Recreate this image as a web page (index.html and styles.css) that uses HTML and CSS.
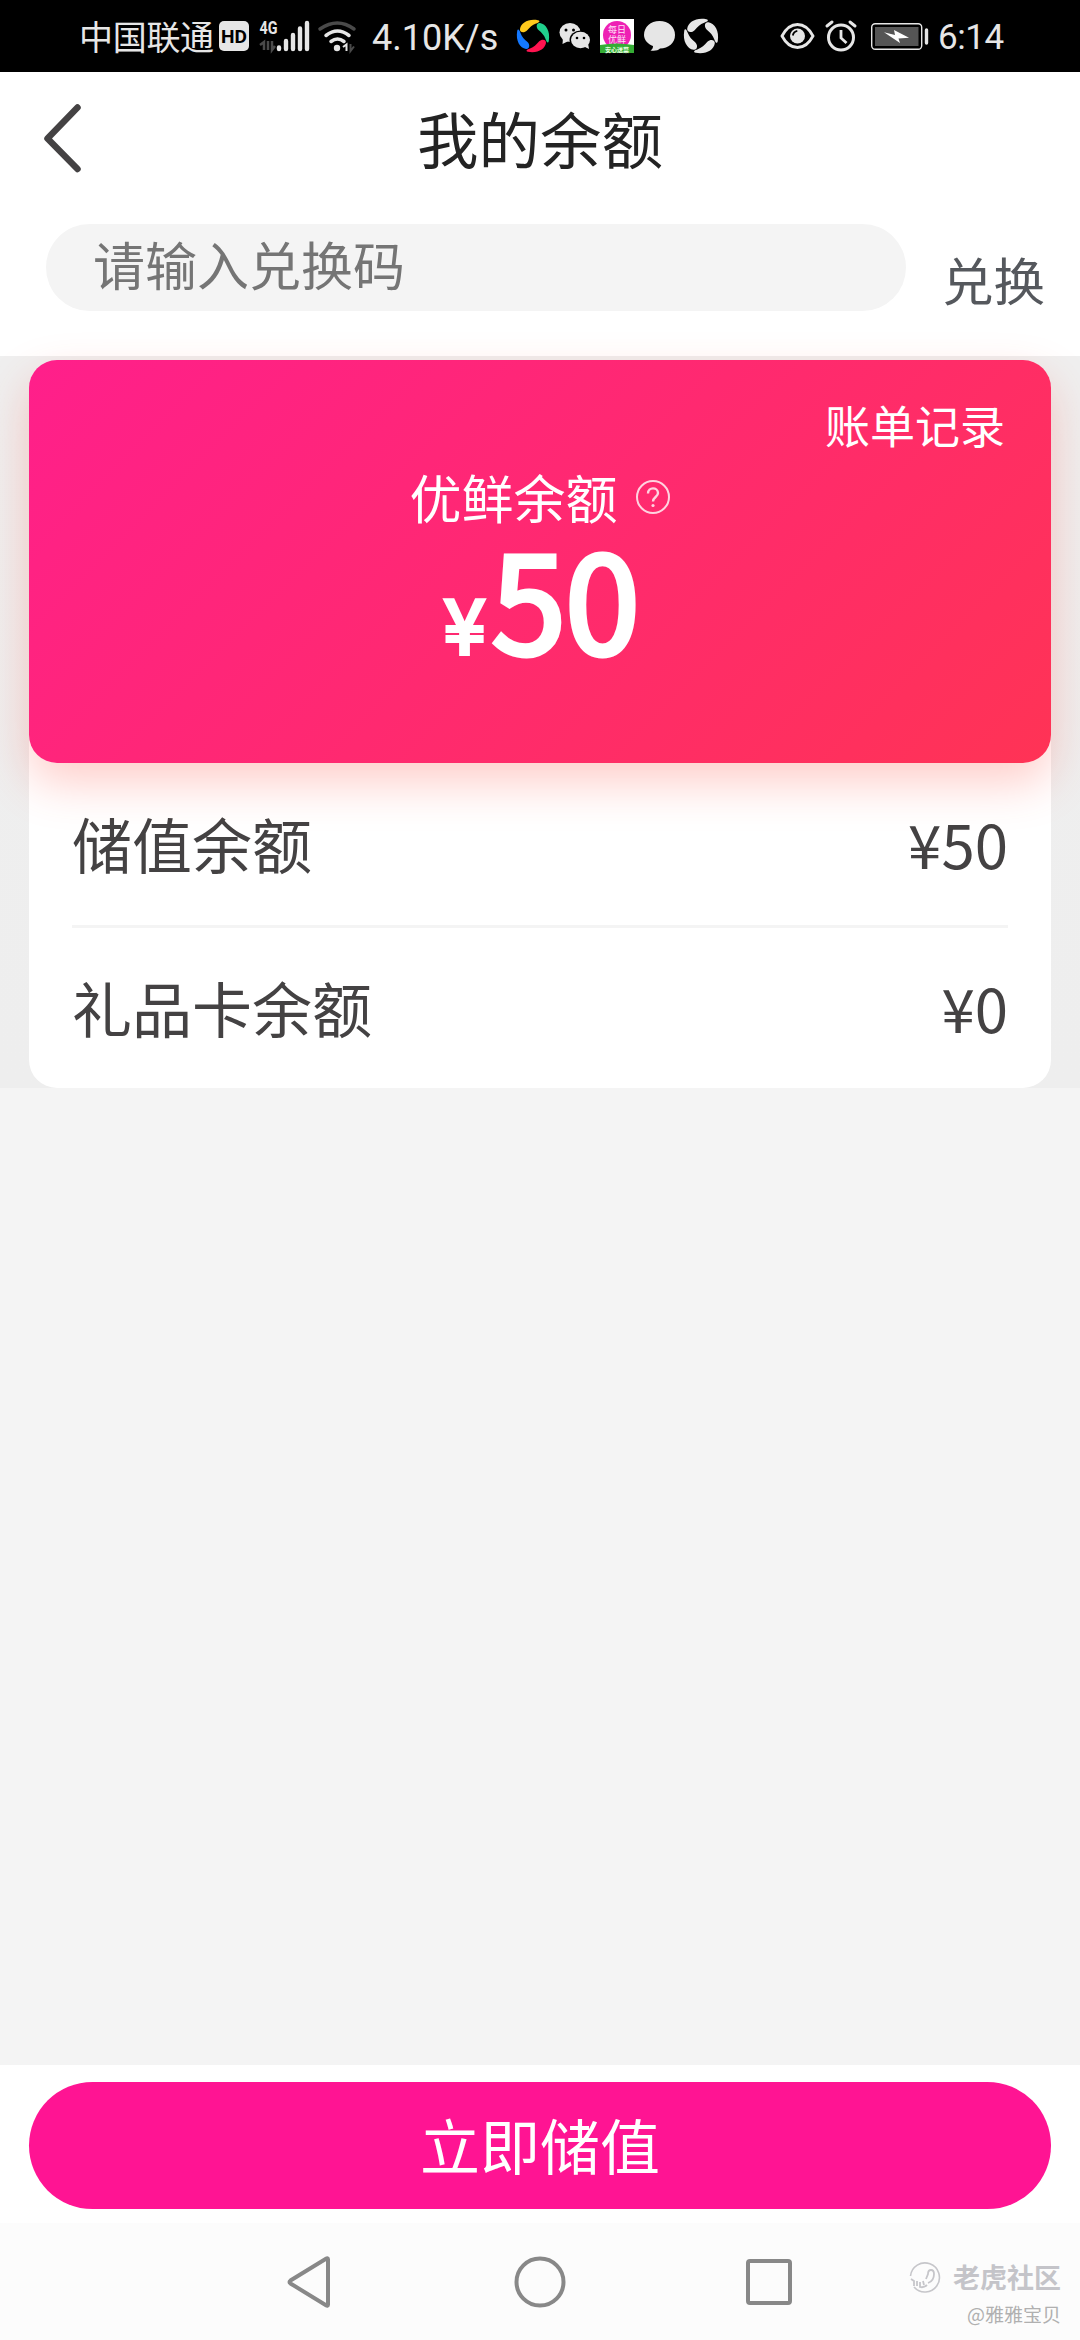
FILE: index.html
```html
<!DOCTYPE html>
<html lang="zh-CN">
<head>
<meta charset="utf-8">
<title>我的余额</title>
<link rel="stylesheet" href="styles.css">
</head>
<body>
<div class="screen">
  <div class="status">
    <span class="carrier">中国联通</span>
    <svg class="st-left" width="140" height="72" viewBox="218 0 140 72">
      <rect x="219" y="21" width="30" height="30" rx="5" fill="#e6e6e6"/>
      <text x="234" y="43" font-family="Roboto" font-weight="700" font-size="18.5" text-anchor="middle" textLength="26" lengthAdjust="spacingAndGlyphs" fill="#000">HD</text>
      <text x="259.500" y="34" font-family="Roboto" font-weight="700" font-size="18" textLength="18" lengthAdjust="spacingAndGlyphs" fill="#e6e6e6">4G</text>
      <path d="M260 45l4-3v8M268 41v9M272 41v9l3-4" stroke="#4a4a4a" stroke-width="2.500" fill="none"/>
      <path d="M279 47.500v1.500M286 41v8M293 35v14M300 28.500v20.500M307 23v26" stroke="#e6e6e6" stroke-width="4.400" stroke-linecap="round"/>
      <path d="M320 29q17.500-12 34 0" stroke="#4a4a4a" stroke-width="3.500" fill="none" stroke-linecap="round"/>
      <path d="M326 35.500q11.500-9 23 0M331 41.500q6.500-5 13 0" stroke="#e6e6e6" stroke-width="3.500" fill="none" stroke-linecap="round"/>
      <circle cx="337" cy="48" r="3.200" fill="#e6e6e6"/>
      <path d="M343 47l3.500-2.500v6.500" stroke="#e6e6e6" stroke-width="2" fill="none"/>
      <path d="M350.500 44v7l3.500-4.500" stroke="#4a4a4a" stroke-width="2" fill="none"/>
    </svg>
    <span class="speed">4.10K/s</span>
    <svg class="st-apps" width="206" height="72" viewBox="514 0 206 72">
      <defs><path id="petal" d="M-13-7C-12-13-5-17.500 5-15.800C8-15 6-13.500 3-12.500C-1-11-3-9-6-5.500C-9-2.500-13.500-3.500-13-7Z"/></defs>
      <g transform="translate(533 36)">
        <use href="#petal" fill="#ffc91c"/><use href="#petal" fill="#20d08c" transform="rotate(90)"/>
        <use href="#petal" fill="#ff1450" transform="rotate(180)"/><use href="#petal" fill="#1478ff" transform="rotate(270)"/>
      </g>
      <g fill="#e6e6e6">
        <ellipse cx="570" cy="32.500" rx="10.500" ry="9.500"/><path d="M563 38l-.5 6 6-3z"/>
        <ellipse cx="580.500" cy="40" rx="11" ry="9.600" fill="#000"/>
        <ellipse cx="580.500" cy="40" rx="9.500" ry="8.200"/><path d="M583 46l6 3-1-6z"/>
      </g>
      <g fill="#000"><circle cx="566" cy="30" r="1.500"/><circle cx="573.500" cy="30" r="1.500"/><circle cx="577" cy="38" r="1.300"/><circle cx="584" cy="38" r="1.300"/></g>
      <rect x="600" y="19" width="34" height="34" fill="#fff"/>
      <circle cx="617" cy="35" r="14" fill="#ee20b4"/>
      <text x="617" y="33" font-family="Noto Sans CJK SC" font-size="9" text-anchor="middle" fill="#ffe4f8">每日</text>
      <text x="617" y="42.500" font-family="Noto Sans CJK SC" font-size="9" text-anchor="middle" fill="#ffe4f8">优鲜</text>
      <path d="M600 45q17-3 34 0v8h-34z" fill="#35ad35"/>
      <text x="617" y="51.500" font-family="Noto Sans CJK SC" font-size="6" font-weight="700" text-anchor="middle" fill="#e8ffe0">安心送菜</text>
      <path d="M659.500 21c9 0 15.500 6 15.500 14s-6.500 13.500-15 13.500c-2 2-5 2.500-9.500 2 2-1.500 2.500-2.500 2.500-4.500-5-2-9-6-9-11 0-8 6.500-14 15.500-14z" fill="#e6e6e6"/>
      <g transform="translate(701 36) scale(1.060)" fill="#e6e6e6">
        <use href="#petal"/><use href="#petal" transform="rotate(90)"/><use href="#petal" transform="rotate(180)"/><use href="#petal" transform="rotate(270)"/>
      </g>
    </svg>
    <svg class="st-right" width="150" height="72" viewBox="780 0 150 72" fill="none" stroke="#e6e6e6">
      <path d="M782 36q6-11.500 15.500-11.500T813 36q-6 11.500-15.500 11.500T782 36z" stroke-width="2.800"/>
      <circle cx="797.500" cy="36" r="7.500" fill="#e6e6e6" stroke="none"/><path d="M792.800 35.500q.8-4 4.500-4.700" stroke="#000" stroke-width="1.800"/>
      <circle cx="841" cy="37.500" r="12.500" stroke-width="3"/><path d="M841 30v8l5.500 5" stroke-width="2.800"/><path d="M827 26l5-4M855 26l-5-4" stroke-width="3" stroke-linecap="round"/>
      <rect x="871.700" y="23.700" width="50" height="25.500" rx="3.500" stroke-width="1.400"/><rect x="875" y="27" width="43.500" height="19" fill="#555" stroke="none"/>
      <path d="M884 32.300l11 2.700-1-5 15 7.700-10.500.8 1.500 4.500z" fill="#fff" stroke="none"/>
      <path d="M926.500 30v13" stroke-width="3.400" stroke-linecap="round"/>
    </svg>
    <span class="clock">6:14</span>
  </div>

  <header class="header">
    <svg class="back" width="44" height="72" viewBox="0 0 44 72"><path d="M37.500 5.500L7.500 36.500l30 30.500" fill="none" stroke="#444243" stroke-width="6.500" stroke-linecap="round" stroke-linejoin="round"/></svg>
    <h1 class="title">我的余额</h1>
  </header>

  <div class="redeem">
    <div class="code"><span>请输入兑换码</span></div>
    <span class="redeem-btn">兑换</span>
  </div>

  <main class="wallet">
    <section class="card">
      <div class="bill">账单记录</div>
      <div class="label"><span>优鲜余额</span>
        <svg width="36" height="36" viewBox="0 0 36 36" fill="none" stroke="#ffd3e0" stroke-width="2"><circle cx="18" cy="18" r="16"/><path d="M13 14.500c0-7 10-6.500 10-.5 0 4-5 4-5 8.500" stroke-width="2.400"/><circle cx="18" cy="26.500" r="1.600" fill="#ffd3e0" stroke="none"/></svg>
      </div>
      <div class="amount"><span class="yen">¥</span><span class="num">50</span></div>
    </section>
    <section class="rows">
      <div class="row"><span>储值余额</span><span class="val">¥50</span></div>
      <div class="row row-last"><span>礼品卡余额</span><span class="val">¥0</span></div>
    </section>
  </main>

  <div class="space"></div>

  <footer class="footer"><div class="topup">立即储值</div></footer>

  <nav class="nav">
    <svg width="56" height="56" viewBox="-3 0 56 56"><path d="M43 5.500v45q0 2-2 .8L5.500 29.500q-2-1.500 0-3L41 4.700q2-1.200 2 .8z"/></svg>
    <svg width="56" height="56" viewBox="0 0 56 56"><circle cx="28" cy="28" r="23.500"/></svg>
    <svg width="56" height="56" viewBox="0 0 56 56"><rect x="7" y="7" width="42" height="42" rx="2"/></svg>
  </nav>
  <div class="mark">
    <div class="mark-top">
      <svg width="32" height="32" viewBox="0 0 32 32" fill="none" stroke="#c6c6ca" stroke-width="1.600"><path d="M1.500 15A14.500 14.500 0 1 1 5 26"/><path d="M2 18l3 2v5M8 20v5M11 21v5q4 1 7-2M14 20l1 4M19 22q6-2 6-9 0-4-3-4t-3 4l-2 5" stroke-width="1.800"/></svg>
      <span>老虎社区</span>
    </div>
    <div class="mark-user">@雅雅宝贝</div>
  </div>
</div>
</body>
</html>
```
FILE: styles.css
```css
* { box-sizing: border-box; margin: 0; padding: 0; }
body { width: 1080px; height: 2340px; overflow: hidden; background: #f4f4f4; font-family: "Noto Sans CJK SC", "Noto Sans", sans-serif; }
.screen { position: relative; width: 1080px; height: 2340px; display: flex; flex-direction: column; }
.screen svg { display: block; flex: none; }

.status { height: 72px; flex: none; display: flex; align-items: center; background: #000; color: #e6e6e6; padding-left: 79px; white-space: nowrap; }
.carrier { width: 139px; font-size: 34px; line-height: 72px; letter-spacing: -0.3px; }
.speed { width: 142px; margin-left: 14px; font: 36px/72px Roboto, sans-serif; padding-top: 3px; }
.st-apps { margin-right: 60px; }
.clock { margin-left: 8px; font: 35px/72px Roboto, sans-serif; letter-spacing: -0.4px; padding-top: 3px; }

.header { height: 134px; flex: none; display: grid; grid-template-columns: 80px 1fr 80px; align-items: center; background: #fff; }
.back { margin-left: 40px; margin-top: -2px; }
.title { height: 134px; font-size: 61.5px; font-weight: 400; line-height: 131px; text-align: center; color: #232323; }

.redeem { height: 150px; flex: none; display: flex; align-items: flex-start; background: #fff; padding: 18px 35px 0 46px; }
.code { width: 861px; height: 87px; border-radius: 44px; background: #f4f4f4; padding-left: 47px; font-size: 52px; line-height: 79px; color: #757575; }
.redeem-btn { margin-left: 36px; font-size: 51.5px; line-height: 76px; padding-top: 17px; color: #55585d; white-space: nowrap; }

.wallet { height: 732px; flex: none; padding: 4px 29px 0; background: linear-gradient(#efefef, #eeeeee); }
.card { position: relative; z-index: 1; height: 403px; border-radius: 28px; background: linear-gradient(135deg, #ff1f8b, #ff3355); box-shadow: 0 20px 46px rgba(255, 75, 60, 0.27); color: #fff; display: flex; flex-direction: column; }
.bill { height: 60px; margin-top: 35px; padding-right: 46px; text-align: right; font-size: 45px; line-height: 60px; }
.label { height: 70px; margin-top: 7px; display: flex; align-items: center; justify-content: center; gap: 17px; font-size: 52px; line-height: 70px; }
.amount { height: 130px; margin-top: 9px; padding-left: 3px; display: flex; align-items: baseline; justify-content: center; line-height: 110px; }
.yen { font-size: 75px; -webkit-text-stroke: 4px #fff; letter-spacing: 6px; }
.num { font-size: 134px; -webkit-text-stroke: 5px #fff; letter-spacing: -0.5px; }

.rows { height: 353px; margin-top: -28px; padding: 28px 43px 0; background: #fff; border-radius: 0 0 28px 28px; }
.row { height: 165px; display: flex; justify-content: space-between; align-items: flex-start; font-size: 60px; line-height: 159px; color: #444243; border-bottom: 3px solid #f4f4f4; }
.row-last { height: 160px; border-bottom: 0; line-height: 157px; }

.space { flex: 1; }
.footer { height: 158px; flex: none; padding: 17px 29px 0; background: #fff; }
.topup { height: 127px; border-radius: 64px; background: #ff1493; color: #fff; text-align: center; font-size: 60px; line-height: 124px; }

.nav { height: 117px; flex: none; background: #fcfcfc; padding: 31px 283px 0 282px; display: flex; justify-content: space-between; align-items: flex-start; fill: none; stroke: #888; stroke-width: 4; }

.mark { position: absolute; right: 19px; bottom: 12px; color: #c4c4c9; text-align: right; }
.mark-top { display: flex; align-items: center; justify-content: flex-end; gap: 12px; font-size: 27px; font-weight: 700; line-height: 36px; margin-bottom: 5px; }
.mark-user { font-size: 19px; line-height: 28px; color: #b0b0b0; }
```
